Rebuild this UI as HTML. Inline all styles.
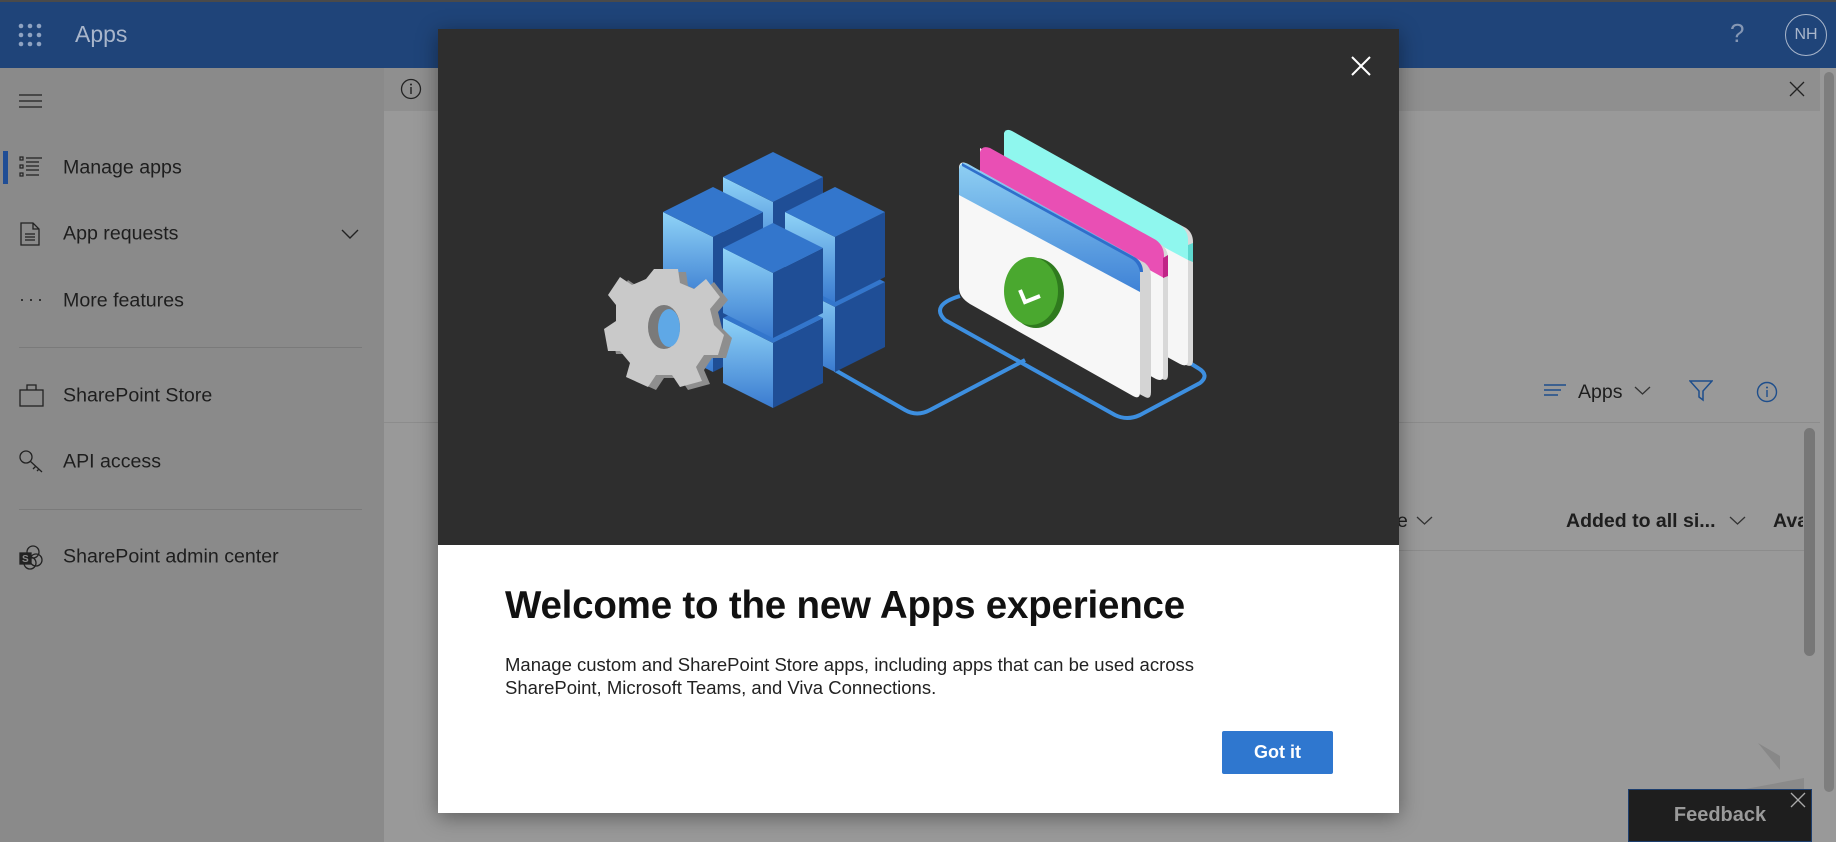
<!DOCTYPE html>
<html><head><meta charset="utf-8">
<style>
*{margin:0;padding:0;box-sizing:border-box}
body{width:1836px;height:842px;overflow:hidden;background:#999;font-family:"Liberation Sans",sans-serif;position:relative;color:#1f1f1f}
.abs{position:absolute}
.hdr{left:0;top:0;width:1836px;height:68px;background:#1f4479;border-top:2px solid #4a4a4a}
.side{left:0;top:68px;width:384px;height:774px;background:#8a8a8a}
.info{left:384px;top:68px;width:1436px;height:43px;background:#8f8f8f}
.nav{position:absolute;left:63px;font-size:19.6px;color:#1e1e1e;transform:translateY(-50%)}
.div{position:absolute;left:19px;width:343px;height:1px;background:#7a7a7a}
.modal{left:438px;top:29px;width:961px;height:784px;background:#fff;box-shadow:0 4px 20px rgba(0,0,0,.4)}
.img{left:0;top:0;width:961px;height:516px;background:#2e2e2e}
</style></head><body>
<div class="abs hdr"></div>
<svg class="abs" style="left:17px;top:22px" width="26" height="26" viewBox="0 0 26 26" fill="#8fa3c2">
<circle cx="4" cy="4" r="2.3"/><circle cx="13" cy="4" r="2.3"/><circle cx="22" cy="4" r="2.3"/>
<circle cx="4" cy="13" r="2.3"/><circle cx="13" cy="13" r="2.3"/><circle cx="22" cy="13" r="2.3"/>
<circle cx="4" cy="22" r="2.3"/><circle cx="13" cy="22" r="2.3"/><circle cx="22" cy="22" r="2.3"/></svg>
<div class="abs" style="left:75px;top:21px;font-size:23px;color:#a9b6cb">Apps</div>
<div class="abs" style="left:1730px;top:18px;font-size:26px;color:#8597b4">?</div>
<div class="abs" style="left:1785px;top:14px;width:42px;height:42px;border:1.5px solid #a9b6cb;border-radius:50%;color:#a9b6cb;font-size:16px;line-height:39px;text-align:center">NH</div>

<div class="abs side"></div>
<div class="abs info"></div>
<svg class="abs" style="left:400px;top:78px" width="22" height="22"><circle cx="11" cy="11" r="9.5" fill="none" stroke="#222" stroke-width="1.3"/><rect x="10.3" y="9" width="1.4" height="7" fill="#222"/><circle cx="11" cy="6.5" r="1" fill="#222"/></svg>
<svg class="abs" style="left:1789px;top:81px" width="16" height="16"><path d="M1 1L15 15M15 1L1 15" stroke="#222" stroke-width="1.3"/></svg>

<svg class="abs" style="left:19px;top:94px" width="24" height="14"><path d="M0 1H23M0 7H23M0 13H23" stroke="#222" stroke-width="1.3"/></svg>
<div class="abs" style="left:3px;top:151px;width:5px;height:33px;background:#1f4d95"></div>
<svg class="abs" style="left:19px;top:156px" width="24" height="22" fill="none" stroke="#222" stroke-width="1.2"><rect x="1" y="1" width="3" height="3"/><rect x="1" y="9" width="3" height="3"/><rect x="1" y="17" width="3" height="3"/><path d="M7 2H23M7 6H20M7 10H20M7 14H20M7 19H20"/></svg>
<div class="nav" style="top:168px">Manage apps</div>
<svg class="abs" style="left:20px;top:222px" width="20" height="24" fill="none" stroke="#222" stroke-width="1.3"><path d="M1 1H13L19 7V23H1Z M13 1V7H19 M5 12H15 M5 15H15 M5 18H15"/></svg>
<div class="nav" style="top:234px">App requests</div>
<svg class="abs" style="left:341px;top:228px" width="18" height="12"><path d="M1 2L9 10L17 2" fill="none" stroke="#222" stroke-width="1.4"/></svg>
<div class="abs" style="left:19px;top:289px;font-size:18px;letter-spacing:3px;color:#222">···</div>
<div class="nav" style="top:301px">More features</div>
<div class="div" style="top:347px"></div>
<svg class="abs" style="left:19px;top:384px" width="25" height="24" fill="none" stroke="#222" stroke-width="1.3"><rect x="1" y="6" width="23" height="16"/><path d="M8 6V1H17V6"/></svg>
<div class="nav" style="top:396px">SharePoint Store</div>
<svg class="abs" style="left:19px;top:450px" width="25" height="25" fill="none" stroke="#222" stroke-width="1.3"><circle cx="7" cy="7" r="6"/><path d="M11 11L23 22M17 16L14 19M20 19L18 21"/></svg>
<div class="nav" style="top:462px">API access</div>
<div class="div" style="top:509px"></div>
<svg class="abs" style="left:19px;top:545px" width="25" height="25" fill="none" stroke="#222" stroke-width="1.3"><circle cx="14" cy="7" r="6"/><circle cx="17" cy="15" r="6"/><circle cx="11" cy="18" r="6"/><rect x="1" y="8" width="11" height="11" fill="#222"/><text x="3" y="17" font-size="10" fill="#8a8a8a" stroke="none" font-weight="bold">S</text></svg>
<div class="nav" style="top:557px">SharePoint admin center</div>

<svg class="abs" style="left:1543px;top:383px" width="24" height="16"><path d="M1 2H23M1 7H18M1 12H15" stroke="#1e4e8c" stroke-width="1.4"/></svg>
<div class="abs" style="left:1578px;top:381px;font-size:19.5px;color:#1e1e1e">Apps</div>
<svg class="abs" style="left:1634px;top:386px" width="17" height="10"><path d="M1 1L8.5 8L16 1" fill="none" stroke="#333" stroke-width="1.3"/></svg>
<svg class="abs" style="left:1689px;top:380px" width="24" height="22"><path d="M1 1H23L14 11V20L10 17V11Z" fill="none" stroke="#1e4e8c" stroke-width="1.5"/></svg>
<svg class="abs" style="left:1756px;top:381px" width="22" height="22"><circle cx="11" cy="11" r="9.5" fill="none" stroke="#1e4e8c" stroke-width="1.4"/><rect x="10.3" y="9" width="1.4" height="7" fill="#1e4e8c"/><circle cx="11" cy="6.5" r="1" fill="#1e4e8c"/></svg>
<div class="abs" style="left:384px;top:422px;width:1436px;height:1px;background:#8c8c8c"></div>
<div class="abs" style="left:1397px;top:510px;font-size:19.5px;color:#1e1e1e">e</div>
<svg class="abs" style="left:1416px;top:516px" width="17" height="10"><path d="M1 1L8.5 8L16 1" fill="none" stroke="#333" stroke-width="1.3"/></svg>
<div class="abs" style="left:1566px;top:510px;font-size:19.5px;font-weight:bold;color:#1e1e1e">Added to all si...</div>
<svg class="abs" style="left:1729px;top:516px" width="17" height="10"><path d="M1 1L8.5 8L16 1" fill="none" stroke="#333" stroke-width="1.3"/></svg>
<div class="abs" style="left:1773px;top:510px;font-size:19.5px;font-weight:bold;color:#1e1e1e;width:30px;overflow:hidden;white-space:nowrap">Available</div>
<div class="abs" style="left:1399px;top:550px;width:405px;height:1px;background:#8c8c8c"></div>
<div class="abs" style="left:1804px;top:428px;width:11px;height:228px;background:#777;border-radius:6px"></div>
<div class="abs" style="left:1824px;top:72px;width:10px;height:720px;background:#7e7e7e;border-radius:5px"></div>
<svg class="abs" style="left:1740px;top:740px" width="64" height="50"><path d="M18 3L40 16L40 30Z" fill="#888"/><path d="M0 50L64 38V50Z" fill="#8a8a8a"/></svg>

<div class="abs" style="left:1628px;top:789px;width:184px;height:53px;background:#1e1e1e;border:1.5px solid #1d3e6e;color:#9a9a9a;font-size:20px;font-weight:bold;text-align:center;line-height:50px">Feedback</div>
<svg class="abs" style="left:1790px;top:792px" width="16" height="16"><path d="M1 1L15 15M15 1L1 15" stroke="#aaa" stroke-width="1.3"/></svg>

<div class="abs modal">
<div class="abs img"></div>
<svg class="abs" style="left:913px;top:27px" width="20" height="20"><path d="M1 1L19 19M19 1L1 19" stroke="#fff" stroke-width="2"/></svg>
<div class="abs" style="left:67px;top:555px;font-size:38.5px;font-weight:bold;color:#111;letter-spacing:-.2px">Welcome to the new Apps experience</div>
<div class="abs" style="left:67px;top:624px;font-size:18.5px;line-height:23px;color:#222;width:760px">Manage custom and SharePoint Store apps, including apps that can be used across SharePoint, Microsoft Teams, and Viva Connections.</div>
<div class="abs" style="left:784px;top:702px;width:111px;height:43px;background:#2f77cf;border-radius:2px;color:#fff;font-size:18px;font-weight:bold;text-align:center;line-height:43px">Got it</div>
</div>

<svg class="abs" style="left:0;top:0" width="1836" height="842">
<defs>
<linearGradient id="lf" x1="0" y1="0" x2="0" y2="1"><stop offset="0" stop-color="#8fd3f7"/><stop offset="1" stop-color="#3a7bd0"/></linearGradient>
<linearGradient id="hb" x1="0" y1="0" x2="0" y2="1"><stop offset="0" stop-color="#8fd0f3"/><stop offset="1" stop-color="#3f82d6"/></linearGradient>
<g id="cube">
<path d="M-50 25L0 50L0 115L-50 90Z" fill="url(#lf)"/>
<path d="M0 50L50 25L50 90L0 115Z" fill="#1f4e96"/>
<path d="M0 0L50 25L0 50L-50 25Z" fill="#3376cc"/>
</g>
</defs>
<g fill="none" stroke="#3d8fe0" stroke-width="4" stroke-linejoin="round">
<path d="M835 370L905 410Q917 417 930 410L1025 360"/>
<path d="M960 296Q930 305 945 320L1115 415Q1127 421 1140 415L1200 383Q1210 375 1198 368L1185 360"/>
</g>
<use href="#cube" x="713" y="257"/>
<use href="#cube" x="835" y="257"/>
<use href="#cube" x="773" y="293"/>
<use href="#cube" x="773" y="152"/>
<use href="#cube" x="713" y="187"/>
<use href="#cube" x="835" y="187"/>
<use href="#cube" x="773" y="223"/>
<g transform="translate(666,325)">
<g fill="#8e8e8e" transform="translate(8,3)">
<path d="M-12 -56L12 -56L14 -42L28 -36L40 -46L54 -28L44 -16L48 0L58 10L52 30L38 30L30 42L36 56L14 62L6 50L-10 50L-18 62L-40 52L-36 38L-46 26L-58 26L-62 4L-50 -4L-50 -20L-58 -30L-46 -48L-34 -40L-20 -46Z"/>
</g>
<g fill="#c9c9c9">
<path d="M-12 -56L12 -56L14 -42L28 -36L40 -46L54 -28L44 -16L48 0L58 10L52 30L38 30L30 42L36 56L14 62L6 50L-10 50L-18 62L-40 52L-36 38L-46 26L-58 26L-62 4L-50 -4L-50 -20L-58 -30L-46 -48L-34 -40L-20 -46Z"/>
</g>
<ellipse cx="-2" cy="2" rx="16" ry="22" fill="#7a7a7a"/>
<ellipse cx="3" cy="3" rx="11" ry="19" fill="#5fa8e6"/>
</g>
<path d="M1009 133L1186 228Q1193 233 1193 242L1193 360Q1193 368 1186 365L1009 270Z" fill="#d8d8d8"/>
<path d="M1004 133L1180 230Q1188 236 1188 246L1188 360Q1188 368 1180 364L1004 268Z" fill="#f6f6f6"/>
<path d="M1004 133Q1006 128 1012 131L1180 225Q1188 231 1188 240L1188 260L1004 162Z" fill="#8ff7ee"/>
<path d="M1188 245L1193 243L1193 262L1188 260Z" fill="#5ed8cf"/>
<path d="M985 148L1162 245Q1168 250 1168 258L1168 375Q1168 382 1162 379L985 283Z" fill="#d8d8d8"/>
<path d="M980 148L1156 246Q1163 252 1163 260L1163 376Q1163 382 1156 379L980 283Z" fill="#f6f6f6"/>
<path d="M980 152Q982 145 990 148L1156 240Q1164 246 1164 256L1164 278L980 176Z" fill="#e94fb4"/>
<path d="M1163 258L1168 255L1168 276L1163 278Z" fill="#c02487"/>
<path d="M965 165L1145 263Q1151 268 1151 276L1151 392Q1151 400 1145 397L965 300Z" fill="#d4d4d4"/>
<path d="M959 167Q960 160 968 164L1133 256Q1140 262 1140 270L1140 392Q1140 400 1133 396L970 304Q959 297 959 288Z" fill="#f7f7f7"/>
<path d="M959 170Q960 160 968 164L1133 256Q1140 262 1140 270L1140 292L959 195Z" fill="url(#hb)"/>
<path d="M962 163L1136 258Q1143 263 1143 272L1140 272Q1138 262 1130 258L962 166Z" fill="#2f6fcb"/>
<ellipse cx="1036" cy="293" rx="28" ry="35" fill="#2f7a1e"/>
<ellipse cx="1031" cy="291" rx="27" ry="34" fill="#4aa82f"/>
<path d="M1020 290L1025 302L1040 296" fill="none" stroke="#fff" stroke-width="4"/>
</svg>
</body></html>
